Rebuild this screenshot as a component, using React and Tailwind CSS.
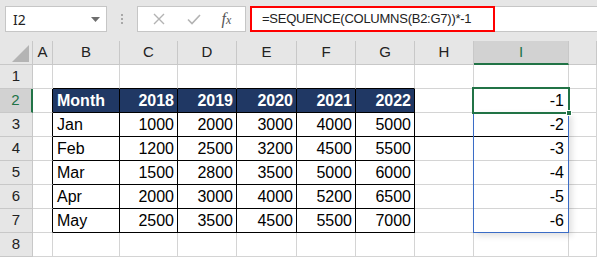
import React from "react";

const COLS = ["A", "B", "C", "D", "E", "F", "G", "H", "I", ""];
const table = [
  ["Month", "2018", "2019", "2020", "2021", "2022"],
  ["Jan", "1000", "2000", "3000", "4000", "5000"],
  ["Feb", "1200", "2500", "3200", "4500", "5500"],
  ["Mar", "1500", "2800", "3500", "5000", "6000"],
  ["Apr", "2000", "3000", "4000", "5200", "6500"],
  ["May", "2500", "3500", "4500", "5500", "7000"],
];

const font = { fontFamily: '"Liberation Sans", Arial, sans-serif' };

function Cell({ row, colIdx }) {
  const inTable = row >= 2 && row <= 7 && colIdx >= 1 && colIdx <= 6;
  const base = "h-[24px] border-r border-b flex items-center text-[16px] text-black";
  if (inTable) {
    const v = table[row - 2][colIdx - 1];
    const isHead = row === 2;
    const isFirst = colIdx === 1;
    return (
      <div
        className={`${base} border-black ${isHead ? "bg-[#203864] text-white font-bold" : "bg-white"} ${
          isFirst ? "justify-start pl-[4px]" : "justify-end pr-[3px]"
        }`}
      >
        {v}
      </div>
    );
  }
  let rb = "border-r-[#d4d4d4]";
  let bb = "border-b-[#d4d4d4]";
  if (row === 1 && colIdx >= 1 && colIdx <= 6) bb = "border-b-black";
  if (colIdx === 0 && row >= 2 && row <= 7) rb = "border-r-black";
  if (row === 3 && (colIdx === 7 || colIdx === 8)) bb = "border-b-black";
  let content = null;
  if (colIdx === 8 && row >= 2 && row <= 7) content = `-${row - 1}`;
  return (
    <div className={`${base} ${rb} ${bb} bg-white justify-end pr-[4px]`}>{content}</div>
  );
}

export default function App() {
  const rows = [1, 2, 3, 4, 5, 6, 7, 8];
  return (
    <div className="w-[597px] h-[257px] overflow-hidden bg-white" style={font}>
      {/* Toolbar */}
      <div className="h-[41px] bg-[#e6e6e6] flex items-start pt-[6px]">
        <div className="ml-[5px] w-[102px] h-[26px] bg-white border border-[#c6c6c6] flex items-center justify-between pl-[7px] pr-[6px]">
          <span className="text-[14px] text-[#222]" style={{ fontFamily: '"Noto Sans", sans-serif' }}>I2</span>
          <svg width="9" height="5" viewBox="0 0 9 5">
            <path d="M0 0 L9 0 L4.5 5 Z" fill="#6e6e6e" />
          </svg>
        </div>
        <div className="w-[30px] h-[26px] flex flex-col items-center justify-center gap-[2px]">
          <div className="w-[2px] h-[2px] bg-[#a8a8a8]" />
          <div className="w-[2px] h-[2px] bg-[#a8a8a8]" />
          <div className="w-[2px] h-[2px] bg-[#a8a8a8]" />
        </div>
        <div className="w-[109px] h-[26px] bg-white border border-[#c6c6c6] flex items-center">
          <div className="w-[42px] flex justify-center">
            <svg width="12" height="12" viewBox="0 0 12 12">
              <path d="M1 1 L11 11 M11 1 L1 11" stroke="#b3b3b3" strokeWidth="1.4" />
            </svg>
          </div>
          <div className="w-[28px] flex justify-center">
            <svg width="14" height="11" viewBox="0 0 14 11">
              <path d="M1 5.5 L5 9.5 L13 1" stroke="#b3b3b3" strokeWidth="1.6" fill="none" />
            </svg>
          </div>
          <div className="flex-1 flex justify-center">
            <span
              className="italic text-[16px] text-[#555]"
              style={{ fontFamily: '"Liberation Serif", "Times New Roman", serif' }}
            >
              f<span className="text-[12px]">x</span>
            </span>
          </div>
        </div>
        <div className="ml-[4px] flex-1 h-[26px] bg-white border-y border-[#c6c6c6] flex">
          <div className="w-[245px] h-[26px] -mt-[1px] border-2 border-[#ff0000] flex items-center pl-[10px]">
            <span className="text-[13px] text-[#222] whitespace-nowrap tracking-[-0.25px]">
              =SEQUENCE(COLUMNS(B2:G7))*-1
            </span>
          </div>
        </div>
      </div>

      {/* Grid */}
      <div className="relative">
        <div className="grid grid-cols-[33px_20px_67px_58px_59px_60px_59px_59px_59px_95px_1fr] auto-rows-[24px]">
          <div className="h-[24px] bg-[#e6e6e6] border-r border-b border-[#c8c8c8] flex items-end justify-end pr-[3px] pb-[2px]">
            <svg width="17" height="17" viewBox="0 0 17 17">
              <path d="M17 0 L17 17 L0 17 Z" fill="#b4b4b4" />
            </svg>
          </div>
          {COLS.map((c, i) =>
            c === "I" ? (
              <div
                key={i}
                className="h-[24px] bg-[#d2d2d2] border-r border-r-[#c8c8c8] border-b-2 border-b-[#217346] flex items-center justify-center text-[15px] text-[#217346]"
              >
                {c}
              </div>
            ) : (
              <div
                key={i}
                className="h-[24px] bg-[#e6e6e6] border-r border-b border-[#c8c8c8] flex items-center justify-center text-[15px] text-[#222]"
              >
                {c}
              </div>
            )
          )}
          {rows.map((r) => (
            <React.Fragment key={r}>
              {r === 2 ? (
                <div className="h-[24px] bg-[#d2d2d2] border-r-2 border-r-[#217346] border-b border-b-[#c8c8c8] flex items-center justify-center text-[15px] text-[#217346]">
                  {r}
                </div>
              ) : (
                <div className="h-[24px] bg-[#e6e6e6] border-r border-b border-[#c8c8c8] flex items-center justify-center text-[15px] text-[#222]">
                  {r}
                </div>
              )}
              {COLS.map((c, i) => (
                <Cell key={i} row={r} colIdx={i} />
              ))}
            </React.Fragment>
          ))}
        </div>
        <div className="absolute left-[473px] top-[71px] w-[96px] h-[121px] border border-[#3a6cc6] shadow-[3px_3px_6px_rgba(0,0,0,0.12)] pointer-events-none" />
        <div className="absolute left-[472px] top-[46px] w-[98px] h-[27px] border-2 border-[#217346] pointer-events-none" />
        <div className="absolute left-[566px] top-[69px] w-[6px] h-[6px] bg-[#217346] border border-white pointer-events-none" />
      </div>
    </div>
  );
}
